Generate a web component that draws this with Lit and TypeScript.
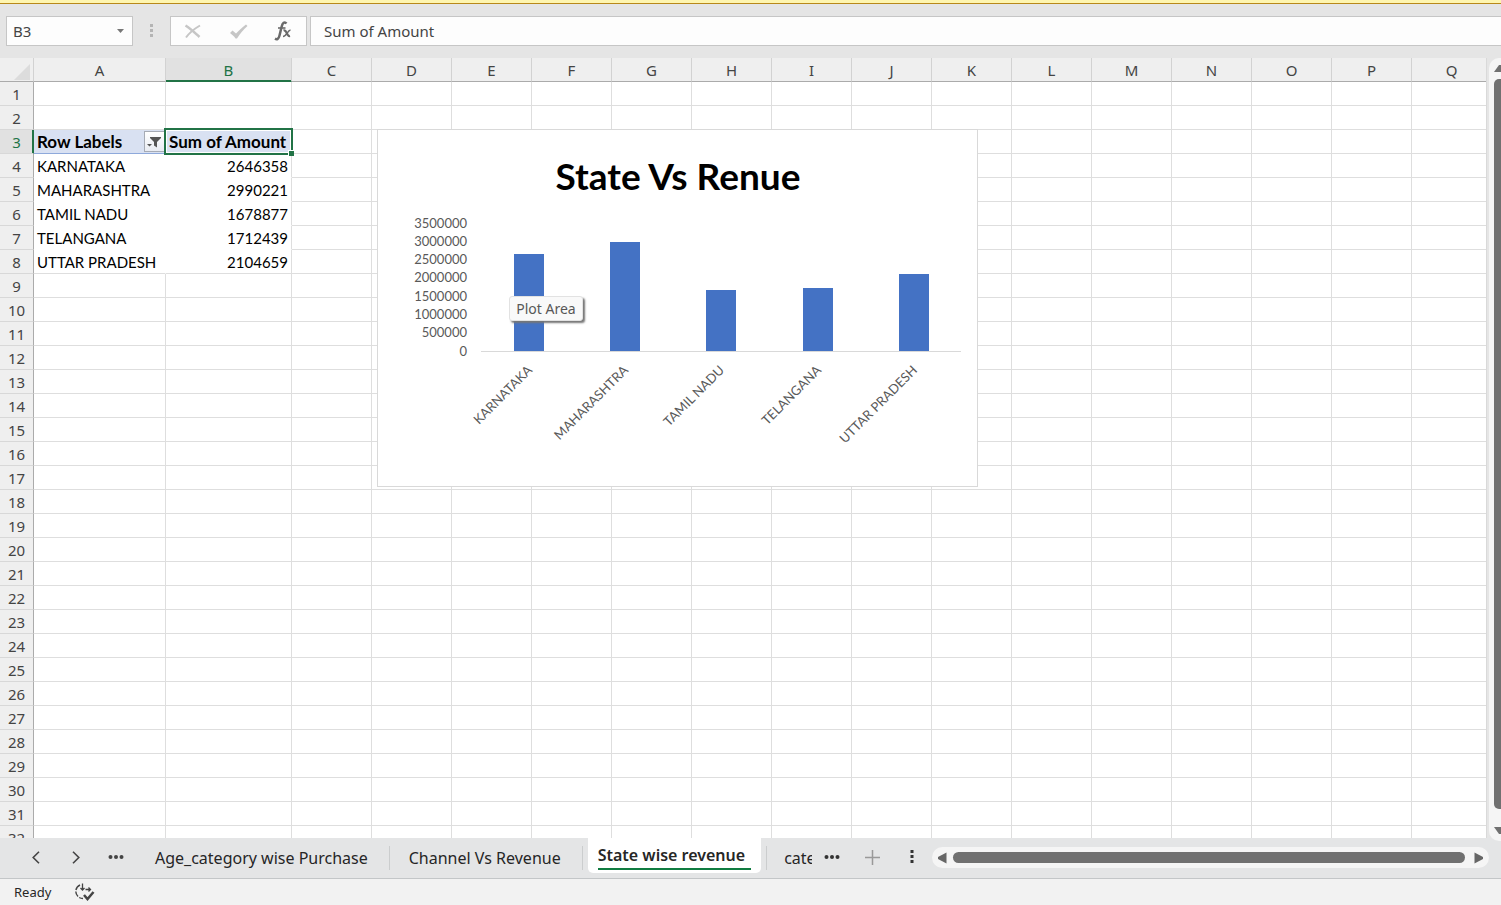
import { LitElement, html, svg, css } from "lit";
import { customElement, property, state } from "lit/decorators.js";
import { classMap } from "lit/directives/class-map.js";

interface StateTotal {
  name: string;
  amount: number;
}

const TOTALS: StateTotal[] = [
  { name: "KARNATAKA", amount: 2646358 },
  { name: "MAHARASHTRA", amount: 2990221 },
  { name: "TAMIL NADU", amount: 1678877 },
  { name: "TELANGANA", amount: 1712439 },
  { name: "UTTAR PRADESH", amount: 2104659 },
];

const COLUMNS = "ABCDEFGHIJKLMNOPQ".split("");
const ROWS = Array.from({ length: 32 }, (_, i) => i + 1);

@customElement("formula-bar")
class FormulaBar extends LitElement {
  @property() cell = "";
  @property() formula = "";

  static styles = css`
    :host {
      display: flex;
      align-items: flex-start;
      height: 54px;
      padding-top: 12px;
      padding-left: 6px;
      box-sizing: border-box;
      background: #e5e5e5;
    }
    .box {
      display: flex;
      align-items: center;
      box-sizing: border-box;
      height: 30px;
      border: 1px solid #c6c6c6;
      background: #fdfdfd;
    }
    .name {
      width: 127px;
    }
    .tools {
      width: 137px;
      justify-content: space-between;
      padding: 0 12px;
      margin-right: 3px;
    }
    .formula {
      flex: 1;
      border-right: 0;
    }
    input {
      flex: 1;
      min-width: 0;
      border: 0;
      padding: 0;
      outline: 0;
      background: none;
      color: #444;
      font: 15px/24px "Noto Sans", sans-serif;
    }
    .name input {
      padding-left: 6px;
    }
    .formula input {
      padding-left: 13px;
    }
    button {
      display: flex;
      padding: 0;
      border: 0;
      background: none;
    }
    .drop {
      padding: 8px 7px;
    }
    .grip {
      margin: 7px 16px 0;
    }
  `;

  render() {
    return html`
      <div class="box name">
        <input aria-label="Name box" .value=${this.cell} />
        <button class="drop" aria-label="Open name list">
          <svg width="9" height="6" viewBox="0 0 9 6"><path d="M1 1h7L4.500 5z" fill="#777" /></svg>
        </button>
      </div>
      <svg class="grip" width="5" height="16" viewBox="0 0 5 16" fill="#b4b4b4">
        <path d="M1 1h3v3h-3zM1 6h3v3h-3zM1 11h3v3h-3z" />
      </svg>
      <div class="box tools">
        <button aria-label="Cancel">
          <svg width="20" height="20" viewBox="0 0 20 20" fill="none" stroke="#c6c6c6">
            <path d="M2.500 4.500c5 3 9 7 14 11.500" stroke-width="2.600" />
            <path d="M17 4.500C11 8 7 11 3 16.500" stroke-width="2" />
          </svg>
        </button>
        <button aria-label="Enter">
          <svg width="20" height="20" viewBox="0 0 20 20" fill="#c6c6c6">
            <path d="M1 12l2.500-2.500 3.500 3C10 9.500 13 6.500 17 3.500l1.500 1.500C14.500 8.500 11 12.500 8 17.500H6.500C5 15 3 13.500 1 12z" />
          </svg>
        </button>
        <button aria-label="Insert function">
          <svg width="20" height="20" viewBox="0 0 20 20" fill="none" stroke="#6a6a6a">
            <path d="M12.500 2.500C10.500 .2 8.500 2 7.700 5.500L5.500 14.500c-.8 3.500-2.500 4.300-4.500 3.200" stroke-width="2.500" />
            <path d="M4 7h7.500" stroke-width="1.600" />
            <path d="M9.500 9.500c3.500-1.500 3 6.500 6.500 5.500" stroke-width="2.300" />
            <path d="M16.500 9c-3 .2-4 6.500-7.500 6.500" stroke-width="1.600" />
          </svg>
        </button>
      </div>
      <div class="box formula">
        <input aria-label="Formula bar" .value=${this.formula} />
      </div>
    `;
  }
}

@customElement("state-chart")
class StateChart extends LitElement {
  @property({ attribute: false }) data: StateTotal[] = [];

  static styles = css`
    :host {
      display: block;
      box-sizing: border-box;
      border: 1px solid #d9d9d9;
      background: #fff;
    }
    svg {
      display: block;
      width: 100%;
    }
    text {
      font-family: Lato, Carlito, sans-serif;
      font-size: 13px;
      fill: #595959;
      text-anchor: end;
    }
    .title {
      font-size: 37px;
      font-weight: 700;
      fill: #000;
      text-anchor: middle;
    }
  `;

  render() {
    const left = 102.8;
    const base = 221;
    const plot = 128;
    const max = 3500000;
    const slot = 96.2;
    const ticks = Array.from({ length: 8 }, (_, i) => i * 500000);
    return html`
      <svg viewBox="0 0 599 356" role="img" aria-label="State Vs Renue">
        <text class="title" x="300" y="60">State Vs Renue</text>
        ${ticks.map(
          (t) => svg`<text x="89" y=${Math.floor(base - (t / max) * plot) + 5}>${t}</text>`
        )}
        ${this.data.map((d, i) => {
          const x = Math.round(left + slot * (i + 0.5) - 15);
          const h = Math.round((d.amount / max) * plot);
          return svg`
            <rect x=${x} y=${base - h} width="30" height=${h} fill="#4472c4"></rect>
            <text transform="translate(${x + 19} 241) rotate(-45)">${d.name}</text>`;
        })}
        <path d="M103 221.500H583" stroke="#d9d9d9" />
      </svg>
    `;
  }
}

@customElement("sheet-grid")
class SheetGrid extends LitElement {
  @property({ attribute: false }) data: StateTotal[] = [];

  static styles = css`
    :host {
      display: flex;
      min-height: 0;
      background: #e5e5e5;
      font-family: Lato, Carlito, sans-serif;
    }
    .view {
      position: relative;
      flex: 1;
      min-width: 0;
      overflow: hidden;
      background: #fff;
      border-right: 1px solid #d9d9d9;
    }
    table {
      table-layout: fixed;
      width: 1492px;
      border-collapse: separate;
      border-spacing: 0;
    }
    .rows {
      width: 34px;
    }
    .first {
      width: 132px;
    }
    .second {
      width: 126px;
    }
    th,
    td {
      box-sizing: border-box;
      height: 24px;
      padding: 0 3px;
      border-right: 1px solid #dedede;
      border-bottom: 1px solid #dedede;
      font-size: 15px;
      line-height: 22px;
      font-weight: 400;
      white-space: nowrap;
      color: #000;
    }
    th {
      padding: 0;
      color: #444;
      background: #efefef;
      font-family: "Noto Sans", sans-serif;
    }
    thead th {
      border-bottom-color: #ababab;
      border-right-color: #d2d2d2;
    }
    tbody th {
      border-right-color: #ababab;
      border-bottom-color: #d8d8d8;
    }
    .corner svg {
      display: block;
      margin: 4px 3px 0 auto;
    }
    thead .on {
      background: #e1e1e1;
      color: #217346;
      border-bottom-color: #217346;
      box-shadow: inset 0 -1px #217346;
    }
    tbody .on {
      background: #e1e1e1;
      color: #217346;
      border-right-color: #217346;
      box-shadow: inset -1px 0 #217346;
    }
    .pivot {
      border-color: #fff;
    }
    .amount {
      text-align: right;
      border-right-color: #dedede;
    }
    .last {
      border-bottom-color: #dedede;
    }
    .head {
      position: relative;
      font-size: 17px;
      font-weight: 700;
      background: #d9e1f2;
      border-right-color: #d9e1f2;
      border-bottom-color: #8ea9db;
    }
    .label {
      display: flex;
      align-items: center;
      justify-content: space-between;
    }
    .filter {
      display: flex;
      align-items: center;
      justify-content: center;
      width: 22px;
      height: 21px;
      margin-right: -4px;
      padding: 0 2px 0 0;
      border: 1px solid #a6abb5;
      background: linear-gradient(#fff, #e9ecf3);
    }
    .selection {
      position: absolute;
      inset: -2px;
      border: 2px solid #217346;
      box-shadow: inset 0 0 0 1px #fff;
    }
    .handle {
      position: absolute;
      right: -3px;
      bottom: -3px;
      width: 5px;
      height: 5px;
      border: solid #fff;
      border-width: 1px 0 0 1px;
      background: #217346;
    }
    .text {
      position: relative;
      z-index: 1;
    }
    .chart {
      position: absolute;
      left: 377px;
      top: 71px;
      width: 601px;
    }
    .tip {
      position: absolute;
      left: 509px;
      top: 238px;
      box-sizing: border-box;
      width: 74px;
      height: 25px;
      border: 1px solid #e2e2e2;
      border-radius: 3px;
      background: #f9f9f9;
      box-shadow: 2px 2px 2px #777;
      color: #575757;
      font: 14px/23px "Noto Sans", sans-serif;
      text-align: center;
      white-space: nowrap;
    }
    .scroll {
      display: flex;
      flex: none;
      flex-direction: column;
      align-items: flex-start;
      gap: 7px;
      box-sizing: border-box;
      width: 12px;
      margin-left: 2px;
      margin-bottom: -3px;
      padding: 6px 0 6px 5px;
      overflow: hidden;
      border-radius: 10px 0 0 10px;
      background: #f5f5f5;
      position: relative;
      z-index: 1;
    }
    .scroll svg {
      flex: none;
    }
    .thumb {
      flex: 1;
      width: 7px;
      margin-bottom: 11px;
      border-radius: 5px 0 0 5px;
      background: #707070;
    }
  `;

  private cells(row: number) {
    const rest = COLUMNS.slice(2).map(() => html`<td></td>`);
    const item = this.data[row - 4];
    if (row === 3) {
      return html`
        <td class="head">
          <div class="label">
            Row Labels
            <button class="filter" aria-label="Filter row labels">
              <svg width="14" height="12" viewBox="0 0 14 12" fill="#555">
                <path d="M3 1h11v1l-4 4v5.500l-3-2V6L3 2zM0 8h5L2.500 10.500z" />
              </svg>
            </button>
          </div>
        </td>
        <td class="head">
          <div class="selection"></div>
          <div class="handle"></div>
          <span class="text">Sum of Amount</span>
        </td>
        ${rest}
      `;
    }
    if (item) {
      const last = row - 3 === this.data.length;
      return html`
        <td class=${classMap({ pivot: true, last })}>${item.name}</td>
        <td class=${classMap({ pivot: true, amount: true, last })}>${item.amount}</td>
        ${rest}
      `;
    }
    return html`<td></td><td></td>${rest}`;
  }

  render() {
    return html`
      <div class="view">
        <table>
          <colgroup>
            <col class="rows" />
            <col class="first" />
            <col class="second" />
            ${COLUMNS.slice(2).map(() => html`<col />`)}
          </colgroup>
          <thead>
            <tr>
              <th class="corner" aria-label="Select all">
                <svg width="16" height="16" viewBox="0 0 16 16"><path d="M16 0v16H0z" fill="#dcdcdc" /></svg>
              </th>
              ${COLUMNS.map((c) => html`<th scope="col" class=${classMap({ on: c === "B" })}>${c}</th>`)}
            </tr>
          </thead>
          <tbody>
            ${ROWS.map(
              (r) => html`<tr>
                <th scope="row" class=${classMap({ on: r === 3 })}>${r}</th>
                ${this.cells(r)}
              </tr>`
            )}
          </tbody>
        </table>
        <state-chart class="chart" .data=${this.data}></state-chart>
        <div class="tip" role="tooltip">Plot Area</div>
      </div>
      <div class="scroll">
        <svg width="14" height="8" viewBox="0 0 14 8"><path d="M0 8L5 1h4l5 7z" fill="#707070" /></svg>
        <div class="thumb"></div>
        <svg width="14" height="8" viewBox="0 0 14 8"><path d="M0 0l5 7h4l5-7z" fill="#707070" /></svg>
      </div>
    `;
  }
}

@customElement("sheet-tabs")
class SheetTabs extends LitElement {
  @state() private active = "State wise revenue";

  static styles = css`
    :host {
      display: flex;
      align-items: flex-start;
      box-sizing: border-box;
      height: 41px;
      border-bottom: 1px solid #c3c6c8;
      background: #e4e5e6;
    }
    button {
      flex: none;
      border: 0;
      padding: 0;
      background: none;
      color: #262626;
      font: 16px/24px "Noto Sans", sans-serif;
      white-space: nowrap;
    }
    .icon {
      display: flex;
      align-items: center;
      justify-content: center;
      width: 40px;
      height: 38px;
    }
    nav {
      display: flex;
      padding-left: 16px;
    }
    .tabs {
      display: flex;
      align-items: flex-start;
    }
    .tab {
      box-sizing: border-box;
      height: 24px;
      margin-top: 8px;
      padding: 0 21px 0 19px;
      border-right: 1px solid #cbcdce;
    }
    .active {
      display: flex;
      align-items: flex-start;
      height: 35px;
      margin: 0 5px;
      padding: 5px 10px 0;
      border: 0;
      border-radius: 0 0 5px 5px;
      background: #fff;
      font-weight: 600;
    }
    .active span {
      padding-right: 6px;
      line-height: 25px;
      border-bottom: 2px solid #107c41;
    }
    .cut {
      width: 46px;
      overflow: hidden;
      border-right: 0;
      border-left: 1px solid #cbcdce;
      padding: 0 0 0 17px;
      text-align: left;
    }
    .scroll {
      display: flex;
      align-items: center;
      flex: 1;
      gap: 6px;
      height: 21px;
      margin: 9px 12px 0 0;
      padding: 0 6px;
      border-radius: 11px;
      background: #f5f5f5;
    }
    .thumb {
      flex: 1;
      height: 11px;
      margin-right: 3px;
      border-radius: 6px;
      background: #707070;
    }
  `;

  private tab(name: string) {
    const on = name === this.active;
    return html`<button
      class=${classMap({ tab: true, active: on })}
      role="tab"
      aria-selected=${on}
      @click=${() => (this.active = name)}
    >
      <span>${name}</span>
    </button>`;
  }

  render() {
    return html`
      <nav aria-label="Sheets">
        <button class="icon" aria-label="Previous sheet">
          <svg width="8" height="13" viewBox="0 0 8 13" fill="none" stroke="#444" stroke-width="1.600"><path d="M7 .7L1.200 6.500 7 12.300" /></svg>
        </button>
        <button class="icon" aria-label="Next sheet">
          <svg width="8" height="13" viewBox="0 0 8 13" fill="none" stroke="#444" stroke-width="1.600"><path d="M1 .7l5.800 5.800L1 12.300" /></svg>
        </button>
        <button class="icon" aria-label="More sheets">
          <svg width="16" height="4" viewBox="0 0 16 4" fill="#444"><circle cx="2.500" cy="2" r="2" /><circle cx="8" cy="2" r="2" /><circle cx="13.500" cy="2" r="2" /></svg>
        </button>
      </nav>
      <div class="tabs" role="tablist">
        ${["Age_category wise Purchase", "Channel Vs Revenue", "State wise revenue"].map((n) => this.tab(n))}
        <button class="tab cut" role="tab" aria-selected="false">cate</button>
      </div>
      <button class="icon" aria-label="Show more tabs">
        <svg width="16" height="4" viewBox="0 0 16 4" fill="#333"><circle cx="2.500" cy="2" r="2" /><circle cx="8" cy="2" r="2" /><circle cx="13.500" cy="2" r="2" /></svg>
      </button>
      <button class="icon" aria-label="New sheet">
        <svg width="15" height="15" viewBox="0 0 15 15" stroke="#999" stroke-width="1.500"><path d="M7.500 0v15M0 7.500h15" /></svg>
      </button>
      <button class="icon" aria-label="Resize tabs">
        <svg width="4" height="14" viewBox="0 0 4 14" fill="#333"><path d="M.5 0h3v3h-3zM.5 5h3v3h-3zM.5 10h3v3h-3z" /></svg>
      </button>
      <div class="scroll">
        <svg width="9" height="12" viewBox="0 0 9 12"><path d="M8.500.500v11L0 7V5z" fill="#666" /></svg>
        <div class="thumb"></div>
        <svg width="9" height="12" viewBox="0 0 9 12"><path d="M.5.500v11L9 7V5z" fill="#666" /></svg>
      </div>
    `;
  }
}

@customElement("app-root")
class AppRoot extends LitElement {
  static styles = css`
    :host {
      display: grid;
      grid-template-columns: minmax(0, 1fr);
      grid-template-rows: auto auto minmax(0, 1fr) auto auto;
      height: 100vh;
      overflow: hidden;
      background: #e5e5e5;
    }
    .strip {
      height: 3px;
      border-bottom: 1px solid #b8891b;
      background: #fff6b0;
    }
    footer {
      display: flex;
      align-items: center;
      gap: 24px;
      height: 26px;
      padding-left: 14px;
      background: #f2f2f2;
      color: #262626;
      font: 13px/20px "Noto Sans", sans-serif;
    }
    button {
      display: flex;
      padding: 0;
      border: 0;
      background: none;
    }
  `;

  render() {
    return html`
      <div class="strip"></div>
      <formula-bar cell="B3" formula="Sum of Amount"></formula-bar>
      <sheet-grid .data=${TOTALS}></sheet-grid>
      <sheet-tabs></sheet-tabs>
      <footer>
        <span>Ready</span>
        <button aria-label="Accessibility checker">
          <svg width="20" height="20" viewBox="0 0 20 20" fill="none" stroke="#444">
            <path d="M5 3A7.200 7.200 0 0 0 .9 8M.8 9.500A7.200 7.200 0 0 0 3 14.500M4.200 15.500A7.200 7.200 0 0 0 8 16.500" stroke-width="1.400" />
            <path d="M7.500 1.500v6.500M5.500 6l2 2 2-2" stroke-width="1.300" />
            <path d="M10.500 7.500h5M13.500 5.500l2 2-2 2" stroke-width="1.300" />
            <path d="M9 13l3.500 4 6-7" stroke-width="2.500" />
          </svg>
        </button>
      </footer>
    `;
  }
}
